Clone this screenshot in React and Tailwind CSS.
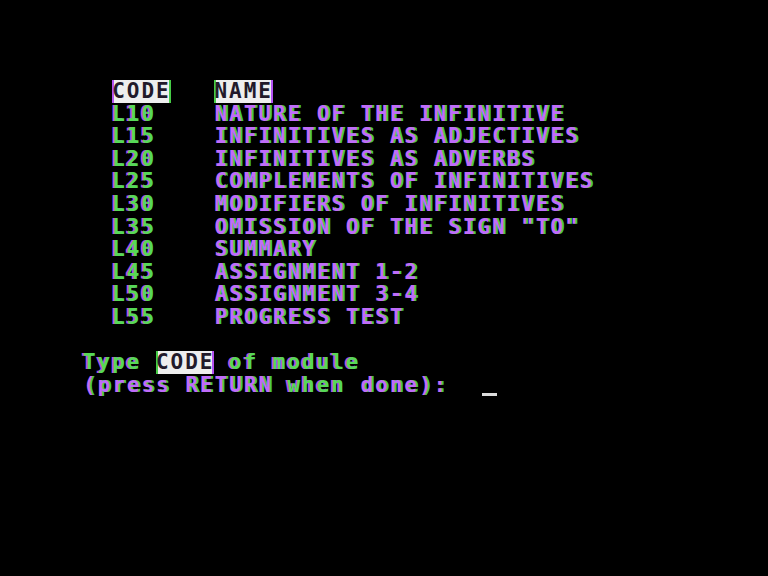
import React from "react";

// Apple II style module menu. Purple text gets a green fringe on its right,
// green text a purple fringe on its left, like an NTSC colour monitor.
const MODULES = [
  ["L10", "NATURE OF THE INFINITIVE"],
  ["L15", "INFINITIVES AS ADJECTIVES"],
  ["L20", "INFINITIVES AS ADVERBS"],
  ["L25", "COMPLEMENTS OF INFINITIVES"],
  ["L30", "MODIFIERS OF INFINITIVES"],
  ["L35", 'OMISSION OF THE SIGN "TO"'],
  ["L40", "SUMMARY"],
  ["L45", "ASSIGNMENT 1-2"],
  ["L50", "ASSIGNMENT 3-4"],
  ["L55", "PROGRESS TEST"],
];

const purple = "text-[#c06cfa] [text-shadow:2px_0_#44cc44]";
const green = "text-[#56d956] [text-shadow:-2px_0_#ae56ec]";

const Txt = ({ children, tone }) => (
  <span className={`inline-block h-[22.6px] whitespace-pre ${tone === "p" ? purple : green}`}>{children}</span>
);

const Inverse = ({ children, edge }) => (
  <span className={`inline-block h-[22.6px] bg-[#eeeeee] text-[#221a2a] whitespace-pre ${edge}`}>
    {children}
  </span>
);

const Row = ({ children }) => <div className="flex items-start h-[22.6px] leading-[22.6px]">{children}</div>;

export default function App() {
  return (
    <div className="w-full h-[576px] bg-black overflow-hidden">
      <div className="pl-[83px] pt-[80px] font-['DejaVu_Sans_Mono',monospace] font-bold text-[21px] tracking-[1.96px]">
        <Row>
          <Txt tone="g">{"  "}</Txt>
          <Inverse edge="shadow-[inset_2px_0_#b452f2,inset_-2px_0_#46cc46]">CODE</Inverse>
          <Txt tone="g">{"   "}</Txt>
          <Inverse edge="shadow-[inset_2px_0_#46cc46,inset_-2px_0_#b452f2]">NAME</Inverse>
        </Row>
        {MODULES.map(([code, name]) => (
          <Row key={code}>
            <Txt tone="g">{"  " + code.padEnd(7)}</Txt>
            <Txt tone="p">{name}</Txt>
          </Row>
        ))}
        <Row />
        <Row>
          <Txt tone="g">{"Type "}</Txt>
          <Inverse edge="shadow-[inset_2px_0_#46cc46,inset_-2px_0_#b452f2]">CODE</Inverse>
          <Txt tone="g">{" of module"}</Txt>
        </Row>
        <Row>
          <Txt tone="p">{"(press RETURN "}</Txt>
          <Txt tone="g">{"when"}</Txt>
          <Txt tone="p">{" done):"}</Txt>
          <span className="inline-block w-[15px] h-[3px] mt-[19px] ml-[34px] bg-[#dcdcdc]" />
        </Row>
      </div>
    </div>
  );
}
